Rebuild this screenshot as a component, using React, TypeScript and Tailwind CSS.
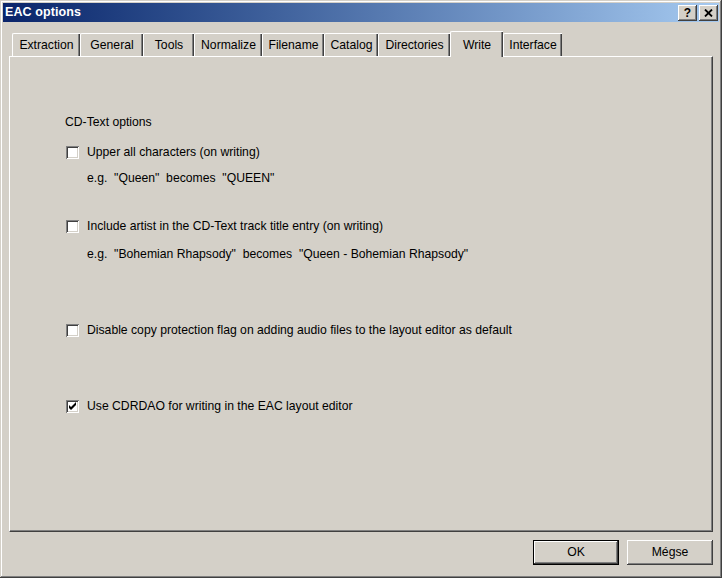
const tabs = [
  { label: "Extraction", w: "w-[68px]" },
  { label: "General", w: "w-[63px]" },
  { label: "Tools", w: "w-[51px]" },
  { label: "Normalize", w: "w-[68px]" },
  { label: "Filename", w: "w-[62px]" },
  { label: "Catalog", w: "w-[54px]" },
  { label: "Directories", w: "w-[72px]" },
  { label: "Write", w: "w-[53px]", active: true },
  { label: "Interface", w: "w-[59px]" },
];

function Checkbox({ checked }: { checked?: boolean }) {
  return (
    <span className="w-[13px] h-[13px] shrink-0 bg-white shadow-[inset_1px_1px_#808080,inset_-1px_-1px_#ffffff,inset_2px_2px_#404040,inset_-2px_-2px_#d4d0c8] relative">
      {checked && (
        <svg className="absolute inset-0" width="13" height="13" viewBox="0 0 13 13">
          <path d="M3 5 L3 8 L5 10 L10 5 L10 2 L5 7 Z" fill="#000" />
        </svg>
      )}
    </span>
  );
}

function Row({ children, className = "" }: { children: React.ReactNode; className?: string }) {
  return <div className={"h-[14px] flex items-center whitespace-nowrap " + className}>{children}</div>;
}

export default function App() {
  return (
    <div className="w-[722px] h-[578px] bg-[#d4d0c8] p-[3px] flex flex-col shadow-[inset_-1px_-1px_#404040,inset_1px_1px_#d4d0c8,inset_-2px_-2px_#808080,inset_2px_2px_#ffffff] font-['Liberation_Sans',Arial,sans-serif] text-[12.2px] text-black select-none">
      {/* title bar */}
      <div className="h-[19px] shrink-0 flex items-center bg-gradient-to-r from-[#0a246a] to-[#a6caf0] pl-[2px] pr-[1px]">
        <span className="text-white font-bold text-[12.5px] tracking-[0.1px]">EAC options</span>
        <div className="ml-auto flex gap-[2px]">
          <button className="w-[19px] h-[16px] bg-[#d4d0c8] flex items-center justify-center font-bold text-[12px] leading-none shadow-[inset_-1px_-1px_#404040,inset_1px_1px_#ffffff,inset_-2px_-2px_#808080]">
            ?
          </button>
          <button className="w-[19px] h-[16px] bg-[#d4d0c8] flex items-center justify-center shadow-[inset_-1px_-1px_#404040,inset_1px_1px_#ffffff,inset_-2px_-2px_#808080]">
            <svg width="9" height="8" viewBox="0 0 9 8">
              <path d="M1 0.5 L8 7.5 M8 0.5 L1 7.5" stroke="#000" strokeWidth="1.8" />
            </svg>
          </button>
        </div>
      </div>

      {/* body */}
      <div className="flex-1 flex flex-col px-[6px] pt-[9px]">
        <div className="h-[25px] flex items-end pl-[3px]">
          {tabs.map((t) =>
            t.active ? (
              <div
                key={t.label}
                className={`${t.w} h-[26px] -mb-px relative z-10 bg-[#d4d0c8] border-t border-l border-white rounded-tl-[2px] shadow-[inset_-1px_0_#404040,inset_-2px_0_#808080] flex items-start justify-center pt-[4px]`}
              >
                {t.label}
              </div>
            ) : (
              <div
                key={t.label}
                className={`${t.w} h-[23px] bg-[#d4d0c8] border-t border-l border-white rounded-tl-[2px] shadow-[inset_-1px_0_#404040,inset_-2px_0_#808080] flex items-center justify-center`}
              >
                {t.label}
              </div>
            )
          )}
        </div>

        <div className="h-[476px] border-t border-l border-white border-r border-b border-r-[#404040] border-b-[#404040] shadow-[inset_-1px_-1px_#808080] flex flex-col pl-[55px] pt-[58px]">
          <Row>CD-Text options</Row>
          <Row className="mt-[16px] gap-[8px] pl-[1px]">
            <Checkbox />
            <span>Upper all characters (on writing)</span>
          </Row>
          <Row className="mt-[12px] pl-[22px]">e.g.&nbsp; "Queen"&nbsp; becomes&nbsp; "QUEEN"</Row>
          <Row className="mt-[34px] gap-[8px] pl-[1px]">
            <Checkbox />
            <span>Include artist in the CD-Text track title entry (on writing)</span>
          </Row>
          <Row className="mt-[14px] pl-[22px]">
            e.g.&nbsp; "Bohemian Rhapsody"&nbsp; becomes&nbsp; "Queen - Bohemian Rhapsody"
          </Row>
          <Row className="mt-[62px] gap-[8px] pl-[1px]">
            <Checkbox />
            <span>Disable copy protection flag on adding audio files to the layout editor as default</span>
          </Row>
          <Row className="mt-[62px] gap-[8px] pl-[1px]">
            <Checkbox checked />
            <span>Use CDRDAO for writing in the EAC layout editor</span>
          </Row>
        </div>

        <div className="flex justify-end gap-[8px] mt-[8px]">
          <button className="w-[86px] h-[25px] border border-black bg-[#d4d0c8] shadow-[inset_-1px_-1px_#404040,inset_1px_1px_#ffffff,inset_-2px_-2px_#808080] flex items-center justify-center">
            OK
          </button>
          <button className="w-[86px] h-[25px] bg-[#d4d0c8] shadow-[inset_-1px_-1px_#404040,inset_1px_1px_#ffffff,inset_-2px_-2px_#808080] flex items-center justify-center">
            Mégse
          </button>
        </div>
      </div>
    </div>
  );
}
